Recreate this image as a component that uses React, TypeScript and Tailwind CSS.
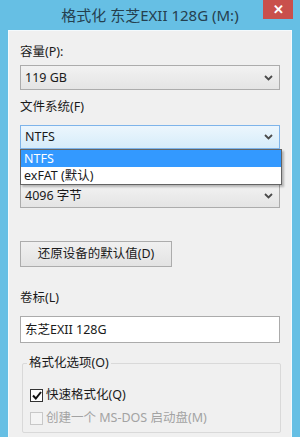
import React from 'react';

function Chevron() {
  return (
    <svg width="9" height="6" viewBox="0 0 9 6" className="shrink-0">
      <path d="M1 1 L4.5 4.5 L8 1" fill="none" stroke="#4a4a4a" strokeWidth="1.8" />
    </svg>
  );
}

function Select({ value, focused }: { value: string; focused?: boolean }) {
  return (
    <div
      className={
        focused
          ? 'flex h-[24px] items-center justify-between border border-[#7eb4ea] bg-gradient-to-b from-[#ecf6fd] to-[#d6ecfa] pl-[4px] pr-[6px]'
          : 'flex h-[24px] items-center justify-between border border-[#acacac] bg-gradient-to-b from-[#f2f2f2] to-[#e4e4e4] pl-[4px] pr-[6px]'
      }
    >
      <span className="text-[12.5px] leading-[16px] text-[#1a1a1a]">{value}</span>
      <Chevron />
    </div>
  );
}

export default function App() {
  return (
    <div
      className="h-[437px] w-[300px] overflow-hidden bg-[#66bfe4] px-[8px]"
      style={{ fontFamily: '"Noto Sans", "Noto Sans CJK SC", sans-serif' }}
    >
      {/* Title bar */}
      <div className="relative flex h-[30px] items-center justify-center">
        <span className="text-[15px] leading-[18px] text-[#25404f]">格式化 东芝EXII 128G (M:)</span>
        <div className="absolute right-[-1px] top-0 flex h-[19px] w-[30px] items-center justify-center bg-[#c9504c]">
          <span className="text-[13px] font-bold leading-[13px] text-white">✕</span>
        </div>
      </div>

      {/* Client area */}
      <div className="h-[407px] border border-b-0 border-[#f4fafd] bg-[#f0f0f0] px-[11px] pt-[13px] text-[#1a1a1a]">
        <div className="text-[12.5px] leading-[16px]">容量(P):</div>
        <div className="mt-[5px] flex h-[25px] items-center justify-between border border-[#acacac] bg-gradient-to-b from-[#f2f2f2] to-[#e4e4e4] pl-[4px] pr-[6px]">
          <span className="text-[12.5px] leading-[16px]">119 GB</span>
          <Chevron />
        </div>

        <div className="mt-[9px] text-[12.5px] leading-[16px]">文件系统(F)</div>
        <div className="relative mt-[10px]">
          <Select value="NTFS" focused />
          {/* open dropdown list, covers the allocation size label */}
          <div className="absolute left-0 right-[-2px] top-[24px] z-10 border border-[#646464] bg-white shadow-[2px_2px_2px_rgba(0,0,0,0.25)]">
            <div className="flex h-[17px] items-center bg-[#3399ff] pl-[3px] text-[12.5px] leading-[16px] text-white">NTFS</div>
            <div className="flex h-[17px] items-center pl-[3px] text-[12.5px] leading-[16px] text-[#1a1a1a]">exFAT (默认)</div>
          </div>
        </div>

        <div className="mt-[9px] h-[16px]" />
        <div className="mt-[10px]">
          <Select value="4096 字节" />
        </div>

        <button className="mt-[33px] flex h-[26px] w-[152px] items-center justify-center border border-[#acacac] bg-gradient-to-b from-[#f0f0f0] to-[#e3e3e3] text-[12.5px] leading-[16px] text-[#1a1a1a]">
          还原设备的默认值(D)
        </button>

        <div className="mt-[23px] text-[12.5px] leading-[16px]">卷标(L)</div>
        <div className="mt-[10px] flex h-[27px] items-center border border-[#ababab] bg-white pl-[4px] text-[12.5px] leading-[16px]">
          东芝EXII 128G
        </div>

        {/* Group box */}
        <div className="relative ml-[2px] mr-[-1px] mt-[20px] h-[70px] rounded-[2px] border border-[#d9d9d9] px-[7px] pt-[23px]">
          <div className="absolute left-[4px] top-[-9px] bg-[#f0f0f0] px-[2px] text-[12.5px] leading-[16px]">格式化选项(O)</div>
          <div className="flex items-center gap-[3px]">
            <div className="flex h-[13px] w-[13px] items-center justify-center border border-[#333] bg-white">
              <svg width="10" height="9" viewBox="0 0 10 9">
                <path d="M1 4.5 L3.8 7.5 L9 1" fill="none" stroke="#111" strokeWidth="2" />
              </svg>
            </div>
            <span className="text-[12.5px] leading-[16px]">快速格式化(Q)</span>
          </div>
          <div className="mt-[7px] flex items-center gap-[3px]">
            <div className="h-[13px] w-[13px] border border-[#c8c8c8] bg-[#f4f4f4]" />
            <span className="text-[12.5px] leading-[16px] text-[#a3a3a3]">创建一个 MS-DOS 启动盘(M)</span>
          </div>
        </div>
      </div>
    </div>
  );
}
